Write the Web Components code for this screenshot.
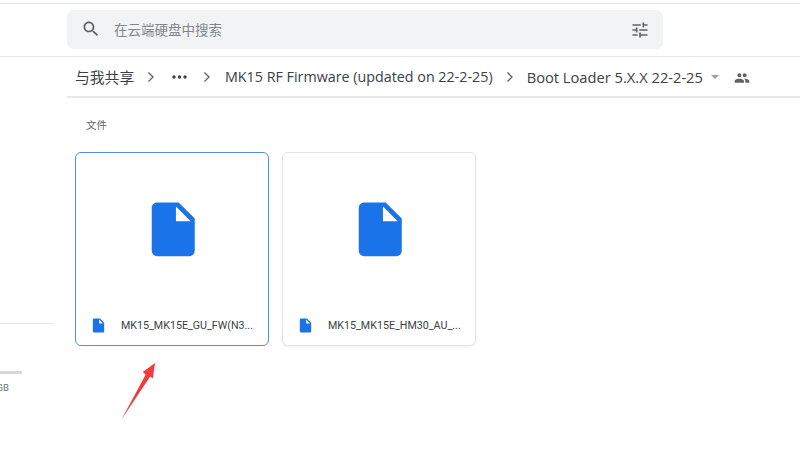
<!DOCTYPE html>
<html lang="zh">
<head>
<meta charset="utf-8">
<title>Drive</title>
<style>
  html, body { margin: 0; height: 100%; background: #fff; overflow: hidden; }
  body { font-family: Roboto, "Noto Sans CJK SC", sans-serif; color: #3c4043; }
</style>
</head>
<body>
<template id="drive-app-tpl">
  <style>
    :host { display: block; position: relative; width: 800px; height: 453px; overflow: hidden; }
    .top { box-sizing: border-box; padding: 6px 0 0 67px; border-top: 1px solid #e8e8e8; margin-top: 3px; height: 54px; border-bottom: 1px solid #e6e6e6; }
    .body { display: grid; grid-template-columns: 67px 1fr; }
    .arrow { position: absolute; left: 0; top: 0; pointer-events: none; }
  </style>
  <div class="top"><slot name="search"></slot></div>
  <div class="body">
    <slot name="side"></slot>
    <slot></slot>
  </div>
  <svg class="arrow" width="800" height="453" viewBox="0 0 800 453"><path d="M121.500 419.500 L145.600 374.800 L142.800 372 L155 363 L152.800 378.500 L150.200 376.400 Z" fill="#f43a3c"/></svg>
</template>

<template id="search-bar-tpl">
  <style>
    :host { display: flex; align-items: center; width: 596px; height: 39px; background: #f1f3f4; border-radius: 7px; color: #80868b; font-size: 13.500px; font-family: "Noto Sans CJK SC", sans-serif; }
    .lens { margin: -1px 0 0 14px; width: 20px; height: 20px; fill: #5f6368; }
    .text { margin: -2px 0 0 13px; flex: 1; }
    .tune { width: 20px; height: 20px; fill: #5f6368; margin-right: 13px; }
  </style>
  <svg class="lens" viewBox="0 0 24 24"><path d="M15.500 14h-.79l-.28-.27C15.410 12.590 16 11.110 16 9.500 16 5.910 13.090 3 9.500 3S3 5.910 3 9.500 5.910 16 9.500 16c1.610 0 3.090-.59 4.230-1.570l.27.28v.79l5 4.990L20.490 19l-4.990-5zm-6 0C7.010 14 5 11.990 5 9.500S7.010 5 9.500 5 14 7.010 14 9.500 11.990 14 9.500 14z"/></svg>
  <span class="text"><slot></slot></span>
  <svg class="tune" viewBox="0 0 24 24"><path d="M3 17v2h6v-2H3zM3 5v2h10V5H3zm10 16v-2h8v-2h-8v-2h-2v6h2zM7 9v2H3v2h4v2h2V9H7zm14 4v-2H11v2h10zm-6-4h2V7h4V5h-4V3h-2v6z"/></svg>
</template>

<template id="bread-crumbs-tpl">
  <style>
    :host { display: flex; align-items: center; height: 41px; box-sizing: border-box; padding-left: 8px; border-bottom: 2px solid #e8e8e8; font-size: 15px; color: #3c4043; white-space: nowrap; }
    .cjk { font-family: "Noto Sans CJK SC", sans-serif; font-size: 14.800px; width: 72px; }
    .chev { width: 8px; height: 12px; flex: none; }
    .dots { width: 15px; height: 4px; fill: #3c4043; margin: 0 16px 0 17px; flex: none; }
    .name { font-family: "Open Sans", sans-serif; font-size: 14.300px; }
    .a { margin-left: 14px; margin-right: 13px; }
    .b { margin-left: 13px; font-size: 14.700px; }
    .caret { width: 0; height: 0; border: 4px solid transparent; border-top: 4px solid #9aa0a6; border-bottom: 0; margin-left: 8px; }
    .ppl { width: 16px; height: 16px; fill: #5f6368; margin: 2px 0 0 15px; }
  </style>
  <span class="cjk">与我共享</span>
  <svg class="chev" viewBox="0 0 8 12"><path d="M1.500 1.500 6 6 1.500 10.500" fill="none" stroke="#5f6368" stroke-width="1.300"/></svg>
  <svg class="dots" viewBox="0 0 15 4"><circle cx="2" cy="2" r="1.700"/><circle cx="7.500" cy="2" r="1.700"/><circle cx="13" cy="2" r="1.700"/></svg>
  <svg class="chev" viewBox="0 0 8 12"><path d="M1.500 1.500 6 6 1.500 10.500" fill="none" stroke="#5f6368" stroke-width="1.300"/></svg>
  <span class="name a">MK15 RF Firmware (updated on 22-2-25)</span>
  <svg class="chev" viewBox="0 0 8 12"><path d="M1.500 1.500 6 6 1.500 10.500" fill="none" stroke="#5f6368" stroke-width="1.300"/></svg>
  <span class="name b">Boot Loader 5.X.X 22-2-25</span>
  <span class="caret"></span>
  <svg class="ppl" viewBox="0 0 24 24"><path d="M16 11c1.660 0 2.990-1.340 2.990-3S17.660 5 16 5c-1.660 0-3 1.340-3 3s1.340 3 3 3zm-8 0c1.660 0 2.990-1.340 2.990-3S9.660 5 8 5C6.340 5 5 6.340 5 8s1.340 3 3 3zm0 2c-2.330 0-7 1.170-7 3.500V19h14v-2.500c0-2.330-4.670-3.500-7-3.500zm8 0c-.29 0-.62.02-.97.05 1.160.84 1.970 1.970 1.970 3.450V19h6v-2.500c0-2.330-4.670-3.500-7-3.500z"/></svg>
</template>

<template id="file-card-tpl">
  <style>
    :host { display: flex; flex-direction: column; width: 194px; height: 194px; box-sizing: border-box; border: 1px solid #e3e4e6; border-radius: 6px; background: #fff; box-shadow: 0 1px 2px rgba(60,64,67,.08); }
    :host([selected]) { border-color: #4f8fdf; box-shadow: none; }
    .preview { flex: 1; display: flex; align-items: center; justify-content: center; padding-left: 2px; }
    .big { width: 64.500px; height: 64.500px; fill: #1a73e8; }
    .foot { height: 39px; flex: none; display: flex; align-items: center; padding-left: 14px; }
    .small { width: 17px; height: 17px; fill: #1a73e8; flex: none; }
    .name { margin-left: 14px; width: 134px; overflow: hidden; white-space: nowrap; text-overflow: ellipsis; font-size: 10.700px; color: #3c4043; }
  </style>
  <div class="preview"><svg class="big" viewBox="0 0 24 24"><path fill-rule="evenodd" d="M14 2H6c-1.100 0-2 .9-2 2v16c0 1.100.9 2 2 2h12c1.100 0 2-.9 2-2V8l-6-6zm-1 7V3.500L18.500 9H13z"/></svg></div>
  <div class="foot">
    <svg class="small" viewBox="0 0 24 24"><path fill-rule="evenodd" d="M14 2H6c-1.100 0-2 .9-2 2v16c0 1.100.9 2 2 2h12c1.100 0 2-.9 2-2V8l-6-6zm-1 7V3.500L18.500 9H13z"/></svg>
    <span class="name"><slot></slot></span>
  </div>
</template>

<template id="storage-meter-tpl">
  <style>
    :host { display: block; overflow: hidden; padding-top: 266px; height: 140px; }
    .rule { width: 54px; height: 1px; background: #e6e6e6; }
    .bar { width: 22px; height: 3px; background: #d6d8db; margin-top: 47px; }
    .label { display: flex; justify-content: flex-end; width: 9px; margin-top: 8px; font-size: 9.500px; color: #70757a; white-space: nowrap; }
  </style>
  <div class="rule"></div>
  <div class="bar"></div>
  <div class="label"><slot></slot></div>
</template>

<template id="file-area-tpl">
  <style>
    :host { display: block; }
    .head { padding: 20px 0 0 19px; height: 34px; font-size: 10.500px; color: #5f6368; font-family: "Noto Sans CJK SC", sans-serif; line-height: 13px; }
    .grid { display: flex; gap: 13px; padding-left: 8px; }
  </style>
  <slot name="crumbs"></slot>
  <div class="head">文件</div>
  <div class="grid"><slot></slot></div>
</template>

<drive-app>
  <search-bar slot="search">在云端硬盘中搜索</search-bar>
  <storage-meter slot="side">GB</storage-meter>
  <file-area>
    <bread-crumbs slot="crumbs"></bread-crumbs>
    <file-card selected>MK15_MK15E_GU_FW(N3...</file-card>
    <file-card>MK15_MK15E_HM30_AU_...</file-card>
  </file-area>
</drive-app>

<script>
  // same boilerplate for every element: clone its template into an open shadow root
  function register(name) {
    customElements.define(name, class extends HTMLElement {
      constructor() {
        super();
        const tpl = document.getElementById(name + '-tpl');
        this.attachShadow({ mode: 'open' }).appendChild(tpl.content.cloneNode(true));
      }
    });
  }
  ['drive-app', 'search-bar', 'bread-crumbs', 'file-card', 'storage-meter', 'file-area'].forEach(register);
</script>
</body>
</html>
